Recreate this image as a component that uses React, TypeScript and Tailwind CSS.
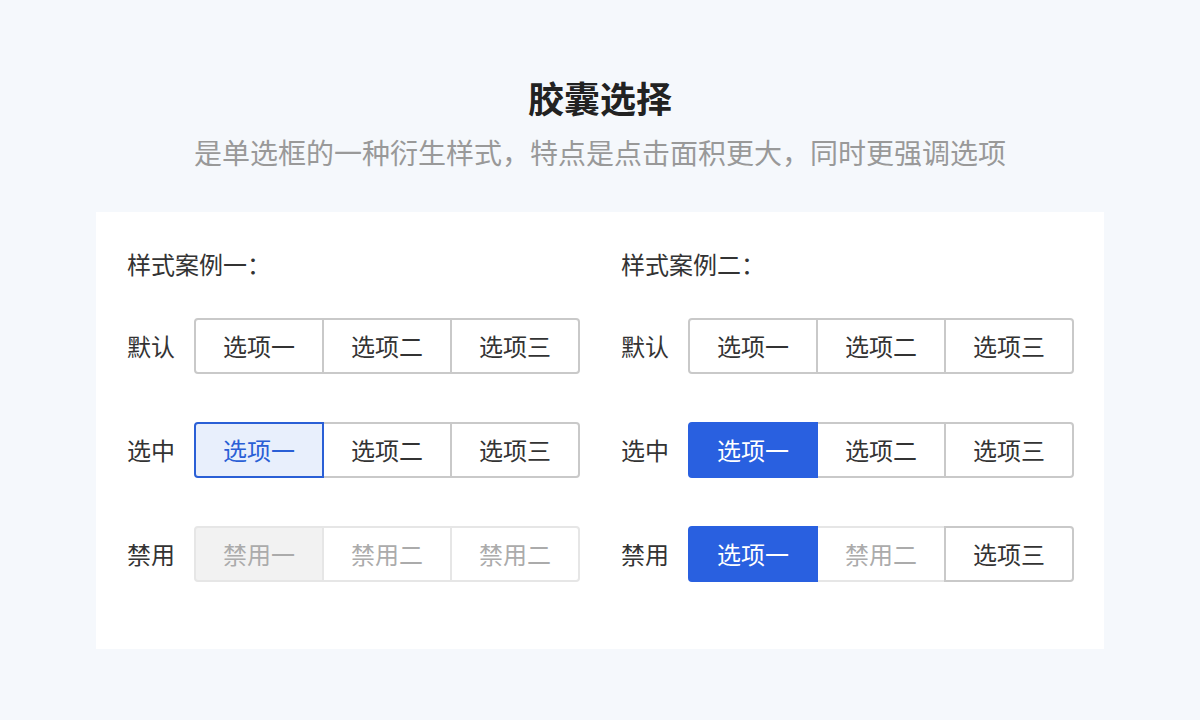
import React from "react";

type SegState = "normal" | "selLight" | "selBlue" | "disabled" | "disabledLight";

const font = { fontFamily: '"Noto Sans CJK SC", "Noto Sans", sans-serif' };

function Segment({ text, state, first, last }: { text: string; state: SegState; first?: boolean; last?: boolean }) {
  const base =
    "w-[130px] h-[56px] flex items-center justify-center text-[24px] border-2 relative " +
    (first ? "rounded-l-[4px] " : "-ml-[2px] ") +
    (last ? "rounded-r-[4px] " : "");
  let cls = "";
  if (state === "normal") cls = "border-[#c9c9c9] bg-white text-[#333333] z-[1]";
  else if (state === "selLight") cls = "border-[#2a5fd6] bg-[#e8effc] text-[#2a5fd6] z-[2]";
  else if (state === "selBlue") cls = "border-[#2960e0] bg-[#2960e0] text-white z-[2]";
  else if (state === "disabled") cls = "border-[#e6e6e6] bg-[#f2f2f2] text-[#ababab] z-0";
  else cls = "border-[#e6e6e6] bg-white text-[#ababab] z-0";
  return <div className={base + cls}>{text}</div>;
}

function Row({ label, items }: { label: string; items: { text: string; state: SegState }[] }) {
  return (
    <div className="flex items-center">
      <div className="w-[67px] text-[24px] text-[#333333] leading-none">{label}</div>
      <div className="flex">
        {items.map((it, i) => (
          <Segment key={i} text={it.text} state={it.state} first={i === 0} last={i === items.length - 1} />
        ))}
      </div>
    </div>
  );
}

export default function App() {
  const n = (t: string): { text: string; state: SegState } => ({ text: t, state: "normal" });
  return (
    <div className="w-[1200px] h-[720px] bg-[#f5f8fc] flex flex-col items-center pt-[72px]" style={font}>
      <div className="text-[36px] font-bold text-[#222222] leading-[50px]">胶囊选择</div>
      <div className="mt-[10px] text-[28px] text-[#999999] leading-[40px]">
        是单选框的一种衍生样式，特点是点击面积更大，同时更强调选项
      </div>
      <div className="mt-[40px] w-[1008px] bg-white pl-[31px] pr-[30px] pt-[35px] pb-[67px] flex gap-[41px]">
        <div className="w-[453px] flex flex-col">
          <div className="text-[24px] text-[#333333] leading-[34px]">样式案例一：</div>
          <div className="mt-[37px] flex flex-col gap-[48px]">
            <Row label="默认" items={[n("选项一"), n("选项二"), n("选项三")]} />
            <Row label="选中" items={[{ text: "选项一", state: "selLight" }, n("选项二"), n("选项三")]} />
            <Row
              label="禁用"
              items={[
                { text: "禁用一", state: "disabled" },
                { text: "禁用二", state: "disabledLight" },
                { text: "禁用二", state: "disabledLight" },
              ]}
            />
          </div>
        </div>
        <div className="w-[453px] flex flex-col">
          <div className="text-[24px] text-[#333333] leading-[34px]">样式案例二：</div>
          <div className="mt-[37px] flex flex-col gap-[48px]">
            <Row label="默认" items={[n("选项一"), n("选项二"), n("选项三")]} />
            <Row label="选中" items={[{ text: "选项一", state: "selBlue" }, n("选项二"), n("选项三")]} />
            <Row
              label="禁用"
              items={[{ text: "选项一", state: "selBlue" }, { text: "禁用二", state: "disabledLight" }, n("选项三")]}
            />
          </div>
        </div>
      </div>
    </div>
  );
}
